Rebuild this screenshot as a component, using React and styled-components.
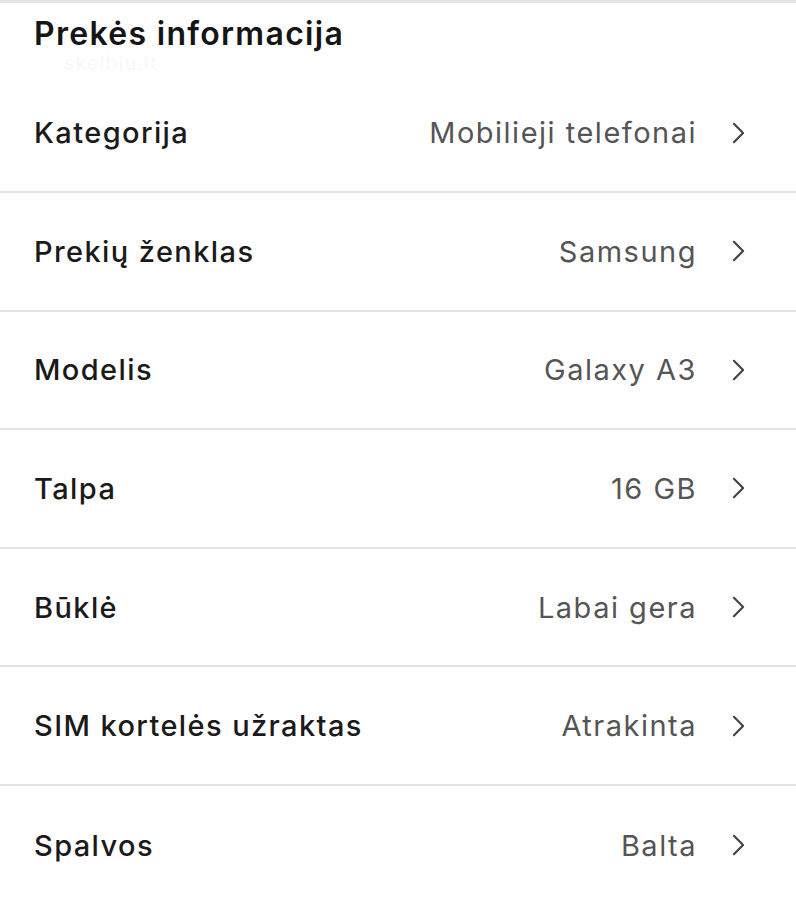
import React from 'react';
import styled, { createGlobalStyle } from 'styled-components';

const GlobalStyle = createGlobalStyle`
  body {
    margin: 0;
    background: #ffffff;
    font-family: Inter, "Noto Sans", sans-serif;
  }
`;

const items = [
  { label: 'Kategorija', value: 'Mobilieji telefonai' },
  { label: 'Prekių ženklas', value: 'Samsung' },
  { label: 'Modelis', value: 'Galaxy A3' },
  { label: 'Talpa', value: '16 GB' },
  { label: 'Būklė', value: 'Labai gera' },
  { label: 'SIM kortelės užraktas', value: 'Atrakinta' },
  { label: 'Spalvos', value: 'Balta' },
];

const Chevron = () => (
  <ChevronIcon viewBox="0 0 16 24" aria-hidden="true">
    <path d="M3 2 L13 12 L3 22" />
  </ChevronIcon>
);

const App = () => {
  return (
    <>
      <GlobalStyle />
      <Page>
        <Header>
          <Title>Prekės informacija</Title>
          <Watermark>skelbiu.lt</Watermark>
        </Header>
        <List>
          {items.map(item => (
            <Row key={item.label}>
              <Label>{item.label}</Label>
              <Value>{item.value}</Value>
              <Chevron />
            </Row>
          ))}
        </List>
      </Page>
    </>
  );
};

const Page = styled.div`
  width: 796px;
  height: 900px;
  overflow: hidden;
  border-top: 3px solid #e4e4e4;
  box-sizing: border-box;
`;

const Header = styled.div`
  position: relative;
  height: 71.4px;
  padding: 12px 34px 0;
  box-sizing: border-box;
`;

const Title = styled.h2`
  margin: 0;
  font-size: 32px;
  font-weight: 600;
  color: #151515;
  letter-spacing: 1.3px;
  line-height: 38px;
`;

const Watermark = styled.span`
  position: absolute;
  left: 64px;
  top: 52px;
  font-size: 20px;
  line-height: 16px;
  letter-spacing: 1px;
  color: rgba(0, 0, 0, 0.05);
`;

const List = styled.div`
  display: flex;
  flex-direction: column;
`;

const Row = styled.div`
  display: flex;
  align-items: center;
  height: 118.6px;
  box-sizing: border-box;
  padding: 0 50px 0 34px;
  border-bottom: 2px solid #e3e3e3;
  &:last-child {
    border-bottom: none;
  }
`;

const Label = styled.span`
  flex: 1;
  font-size: 29px;
  color: #1a1a1a;
  font-weight: 500;
  letter-spacing: 1.4px;
`;

const Value = styled.span`
  font-size: 29px;
  color: #555555;
  letter-spacing: 1.5px;
  margin-right: 34px;
`;

const ChevronIcon = styled.svg`
  width: 15px;
  height: 22px;
  fill: none;
  stroke: #454545;
  stroke-width: 2.4;
  stroke-linecap: round;
  stroke-linejoin: round;
`;

export default App;
